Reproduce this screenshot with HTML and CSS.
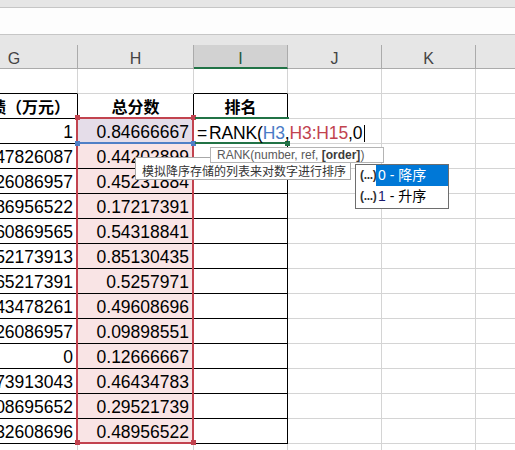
FILE: index.html
```html
<!DOCTYPE html>
<html>
<head>
<meta charset="utf-8">
<link rel="stylesheet" href="styles.css">
</head>
<body>
<div class="app">
  <div class="ribbon"></div>
  <div class="fbar"></div>
  <div class="gap"></div>
  <div class="grid">
    <div class="ch">G</div><div class="ch">H</div><div class="ch active">I</div><div class="ch">J</div><div class="ch">K</div><div class="ch"></div>

    <div class="c bb"></div><div class="c"></div><div class="c bb"></div><div class="c"></div><div class="c"></div><div class="c"></div>

    <div class="c t hd">总业绩（万元）</div><div class="c t hd">总分数</div><div class="c t hd">排名</div><div class="c"></div><div class="c"></div><div class="c"></div>

    <div class="c t num">1</div><div class="c t num sel1">0.84666667</div><div class="c t edit"></div><div class="c"></div><div class="c"></div><div class="c"></div>
    <div class="c t num">0.47826087</div><div class="c t num sel">0.44202899</div><div class="c t"></div><div class="c"></div><div class="c"></div><div class="c"></div>
    <div class="c t num">0.26086957</div><div class="c t num sel">0.45231884</div><div class="c t"></div><div class="c"></div><div class="c"></div><div class="c"></div>
    <div class="c t num">0.86956522</div><div class="c t num sel">0.17217391</div><div class="c t"></div><div class="c"></div><div class="c"></div><div class="c"></div>
    <div class="c t num">0.60869565</div><div class="c t num sel">0.54318841</div><div class="c t"></div><div class="c"></div><div class="c"></div><div class="c"></div>
    <div class="c t num">0.52173913</div><div class="c t num sel">0.85130435</div><div class="c t"></div><div class="c"></div><div class="c"></div><div class="c"></div>
    <div class="c t num">0.65217391</div><div class="c t num sel">0.5257971</div><div class="c t"></div><div class="c"></div><div class="c"></div><div class="c"></div>
    <div class="c t num">0.43478261</div><div class="c t num sel">0.49608696</div><div class="c t"></div><div class="c"></div><div class="c"></div><div class="c"></div>
    <div class="c t num">0.26086957</div><div class="c t num sel">0.09898551</div><div class="c t"></div><div class="c"></div><div class="c"></div><div class="c"></div>
    <div class="c t num">0</div><div class="c t num sel">0.12666667</div><div class="c t"></div><div class="c"></div><div class="c"></div><div class="c"></div>
    <div class="c t num">0.73913043</div><div class="c t num sel">0.46434783</div><div class="c t"></div><div class="c"></div><div class="c"></div><div class="c"></div>
    <div class="c t num">0.08695652</div><div class="c t num sel">0.29521739</div><div class="c t"></div><div class="c"></div><div class="c"></div><div class="c"></div>
    <div class="c t num">0.32608696</div><div class="c t num sel">0.48956522</div><div class="c t"></div><div class="c"></div><div class="c"></div><div class="c"></div>

    <div class="c"></div><div class="c"></div><div class="c"></div><div class="c"></div><div class="c"></div><div class="c"></div>
  </div>

  <div class="ref-blue"></div>
  <div class="range"></div>
  <div class="h h-red h1"></div>
  <div class="h h-red h2"></div>
  <div class="h h-blue h3"></div>
  <div class="h h-blue h4"></div>
  <div class="h h-red h5"></div>
  <div class="h h-red h6"></div>

  <div class="active-top"></div>
  <div class="active-bottom"></div>
  <div class="h fill-handle"></div>

  <div class="formula"><span class="eq">=</span>RANK(<span class="fb">H3</span>,<span class="fr">H3:H15</span>,0</div>
  <div class="cursor"></div>

  <div class="tip-desc">模拟降序存储的列表来对数字进行排序</div>
  <div class="tip-syntax">RANK(number, ref, <b>[order]</b>)</div>

  <div class="dropdown">
    <div class="item on"><span class="dots">(...)</span><span class="lbl">0 - 降序</span></div>
    <div class="item"><span class="dots">(...)</span><span class="lbl"><span class="one">1</span> - 升序</span></div>
  </div>
</div>
</body>
</html>
```

FILE: styles.css
```css
* { box-sizing: border-box; }
html, body { margin: 0; padding: 0; }
body {
  width: 515px;
  height: 450px;
  overflow: hidden;
  background: #fff;
  font-family: "Liberation Sans", "Noto Sans CJK SC", sans-serif;
  color: #000;
}
.app { position: relative; width: 515px; height: 450px; overflow: hidden; }
.ribbon { height: 8px; background: #e6e6e6; border-bottom: 1px solid #c6c6c6; }
.fbar { height: 27px; background: #fdfdfd; border-bottom: 1px solid #c6c6c6; }
.gap { height: 10px; background: #e6e6e6; }

.grid {
  display: grid;
  grid-template-columns: 127px 116px 94px 94px 94px 100px;
  grid-template-rows: 24px repeat(16, 25px);
  margin-left: -49px;
  width: 625px;
}
.ch {
  background: #e6e6e6;
  border-right: 1px solid #ababab;
  border-bottom: 1px solid #ababab;
  font-size: 16px;
  color: #444;
  text-align: center;
  padding-top: 5px;
  line-height: 18px;
}
.ch.active {
  background: #d2d2d2;
  border-bottom: 2px solid #217346;
  color: #215a3c;
}
.c {
  border-right: 1px solid #d4d4d4;
  border-bottom: 1px solid #d4d4d4;
  font-size: 17.5px;
  line-height: 24px;
  padding-top: 1px;
  white-space: nowrap;
  overflow: hidden;
}
.c.t { border-right-color: #000; border-bottom-color: #000; }
.c.bb { border-bottom-color: #000; }
.c.edit { border-right-color: #fff; }
.num { text-align: right; padding-right: 4px; }
.hd {
  font-family: "Noto Sans CJK SC", sans-serif;
  font-weight: bold;
  font-size: 16px;
  text-align: center;
  padding-top: 0;
}
.sel { background: #f9e4e5; }
.sel1 { background: #e5dde9; }

/* selection overlays */
.range {
  position: absolute;
  left: 76px; top: 117px;
  width: 118px; height: 327px;
  border: 2px solid #c2434f;
}
.ref-blue {
  position: absolute;
  left: 76px; top: 117px;
  width: 118px; height: 27px;
  border: 2px solid #4f7fc6;
}
.h { position: absolute; width: 5px; height: 5px; }
.h-red { background: #c2434f; }
.h-blue { background: #4f7fc6; }
.h1 { left: 75px; top: 115px; }
.h2 { left: 191px; top: 115px; }
.h3 { left: 75px; top: 141px; }
.h4 { left: 191px; top: 141px; }
.h5 { left: 75px; top: 440px; }
.h6 { left: 191px; top: 440px; }

.active-top, .active-bottom {
  position: absolute;
  left: 195px; width: 94px; height: 2px;
  background: #217346;
}
.active-top { top: 117px; }
.active-bottom { top: 142px; }
.fill-handle { left: 285px; top: 141px; background: #217346; }

.formula {
  position: absolute;
  left: 197px; top: 121px;
  height: 25px;
  font-size: 17.5px;
  line-height: 25px;
  white-space: nowrap;
  color: #000;
  letter-spacing: -0.15px;
}
.eq { margin-right: 2px; }
.fb { color: #4a7bc6; }
.fr { color: #c2434f; }
.cursor {
  position: absolute;
  left: 364px; top: 125px;
  width: 1px; height: 17px;
  background: #000;
}

.tip-syntax {
  position: absolute;
  left: 210px; top: 147px;
  width: 174px; height: 16px;
  border: 1px solid #b4b4b4;
  background: #fff;
  font-size: 12px;
  line-height: 14px;
  color: #5a5a5a;
  padding-left: 6px;
  white-space: nowrap;
}
.tip-syntax b { color: #3c3c3c; }
.tip-desc {
  position: absolute;
  left: 135px; top: 157px;
  width: 216px; height: 23px;
  border: 1px solid #a8a8a8;
  background: #fff;
  font-family: "Noto Sans CJK SC", sans-serif;
  font-size: 12px;
  line-height: 19px;
  padding-top: 3px;
  padding-left: 6px;
  color: #333;
  white-space: nowrap;
}

.dropdown {
  position: absolute;
  left: 355px; top: 164px;
  width: 94px; height: 45px;
  border: 1px solid #6e6e6e;
  background: #fff;
}
.item { display: flex; height: 21px; align-items: stretch; }
.dots {
  width: 20px;
  padding-left: 4px;
  font-size: 12px;
  font-weight: bold;
  color: #333;
  line-height: 21px;
  letter-spacing: -0.3px;
  white-space: nowrap;
}
.lbl {
  flex: 1;
  padding-left: 2px;
  font-size: 14px;
  line-height: 21px;
  color: #000;
  white-space: nowrap;
}
.item.on .lbl { background: #0078d7; color: #fff; }
.one { color: #1a1a6e; }
```
